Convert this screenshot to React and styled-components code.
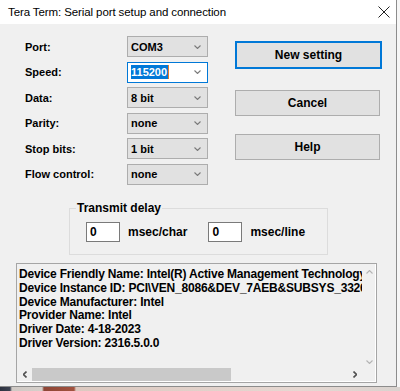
import React from 'react'
import styled, { createGlobalStyle } from 'styled-components'

const GlobalStyle = createGlobalStyle`
  html, body {
    margin: 0;
    padding: 0;
    background: #f6f6f6;
  }
  body {
    font-family: "Liberation Sans", Arial, sans-serif;
    color: #000;
  }
`

const Page = styled.div`
  width: 400px;
  height: 391px;
  overflow: hidden;
  display: flex;
  flex-direction: column;
`

const Window = styled.div`
  width: 397px;
  height: 387px;
  flex: none;
  box-sizing: border-box;
  background: #f0f0f0;
  border-right: 1px solid #8c8c8c;
  border-bottom: 1px solid #8c8c8c;
  display: flex;
  flex-direction: column;
`

const Desktop = styled.div`
  flex: 1;
  background: linear-gradient(90deg, #2d3240 0, #3b4150 10px, #cfc9c4 12px, #d6d0cb 42px,
    #8e4636 44px, #a2523e 74px, #dcc9c0 76px, #e6d8d2 300px, #d9d3cf 400px);
`

const TitleBar = styled.div`
  height: 24px;
  flex: none;
  background: #fff;
  display: flex;
  align-items: center;
  justify-content: space-between;
  padding-left: 8px;
`

const Title = styled.span`
  font-size: 11.5px;
  letter-spacing: -0.1px;
`

const Close = styled.div`
  width: 24px;
  height: 24px;
  display: flex;
  align-items: center;
  justify-content: center;
`

const Body = styled.div`
  display: flex;
  flex-direction: column;
  font-size: 11px;
  font-weight: bold;
`

const Top = styled.div`
  display: flex;
  padding: 12px 0 0 25px;
`

const Form = styled.div`
  display: grid;
  grid-template-columns: 102px 81px;
  grid-auto-rows: 21px;
  row-gap: 4.6px;
`

const Label = styled.div`
  display: flex;
  align-items: center;
`

const Combo = styled.div`
  box-sizing: border-box;
  display: flex;
  align-items: center;
  justify-content: space-between;
  padding: 0 6px 0 3px;
  background: ${p => (p.$focus ? '#fff' : '#e1e1e1')};
  border: 1px solid ${p => (p.$focus ? '#0078d7' : '#adadad')};
`

const Selected = styled.span`
  background: #0078d7;
  color: #fff;
  padding: 1px 1px 1px 0;
  border-right: 1px solid #e87a2a;
`

const Buttons = styled.div`
  display: flex;
  flex-direction: column;
  margin: 5px 0 0 27px;
`

const Button = styled.div`
  box-sizing: border-box;
  width: ${p => (p.$default ? '147px' : '145px')};
  height: ${p => (p.$default ? '28px' : '26px')};
  margin-bottom: ${p => p.$gap || 0}px;
  display: flex;
  align-items: center;
  justify-content: center;
  font-size: 12px;
  background: #e1e1e1;
  border: ${p => (p.$default ? '2px solid #0078d7' : '1px solid #adadad')};
`

const Group = styled.fieldset`
  margin: 17px 0 0 69px;
  width: 259px;
  height: 53px;
  box-sizing: border-box;
  padding: 7px 0 0 0;
  border: 1px solid #dcdcdc;
  min-width: 0;
`

const Legend = styled.legend`
  padding: 0 1px;
  margin-left: 6px;
  font-size: 12px;
  line-height: 13px;
`

const Row = styled.div`
  display: flex;
  align-items: center;
  margin-left: 16px;
`

const Field = styled.div`
  box-sizing: border-box;
  width: 34px;
  height: 20px;
  background: #fff;
  border: 1px solid #7a7a7a;
  padding-left: 3px;
  display: flex;
  align-items: center;
  font-size: 12px;
`

const Unit = styled.span`
  font-size: 12px;
  margin: 0 ${p => p.$after || 0}px 0 8px;
`

const InfoBox = styled.div`
  margin: 8px 0 0 16px;
  width: 361px;
  height: 120px;
  flex: none;
  box-sizing: border-box;
  border: 1px solid #a5a5a5;
  box-shadow: inset -1px -1px 0 #fff;
  display: flex;
  flex-direction: column;
`

const InfoMain = styled.div`
  flex: 1;
  min-height: 0;
  display: flex;
`

const InfoText = styled.div`
  flex: 1;
  min-width: 0;
  padding: 4px 0 0 2px;
  overflow: hidden;
  white-space: nowrap;
  font-size: 12px;
  line-height: 13.8px;
  letter-spacing: -0.2px;
`

const VBar = styled.div`
  width: 14px;
  flex: none;
  display: flex;
  flex-direction: column;
  justify-content: space-between;
  align-items: center;
  padding: 6px 0 4px;
  box-sizing: border-box;
`

const HBar = styled.div`
  height: 14px;
  flex: none;
  display: flex;
  align-items: center;
  padding: 0 19px 0 6px;
`

const Track = styled.div`
  flex: 1;
  height: 13px;
  margin: 0 8px 0 5px;
  display: flex;
`

const Thumb = styled.div`
  width: 199px;
  background: #c9c9c9;
`

const Chevron = ({ dir = 'down', color = '#7a7a7a', size = 7 }) => {
  const pts = {
    down: '0.5,0.5 3.5,3.5 6.5,0.5',
    up: '0.5,3.5 3.5,0.5 6.5,3.5',
    left: '3.5,0.5 0.5,3.5 3.5,6.5',
    right: '0.5,0.5 3.5,3.5 0.5,6.5',
  }[dir]
  const horiz = dir === 'left' || dir === 'right'
  return (
    <svg width={horiz ? 4 : size} height={horiz ? size : 4} viewBox={horiz ? '0 0 4 7' : '0 0 7 4'}>
      <polyline points={pts} fill="none" stroke={color} strokeWidth={horiz ? 1.6 : 1.1} />
    </svg>
  )
}

const settings = [
  ['Port:', 'COM3'],
  ['Speed:', '115200', true],
  ['Data:', '8 bit'],
  ['Parity:', 'none'],
  ['Stop bits:', '1 bit'],
  ['Flow control:', 'none'],
]

const info = [
  'Device Friendly Name: Intel(R) Active Management Technology - SOL (COM3)',
  'Device Instance ID: PCI\\VEN_8086&DEV_7AEB&SUBSYS_33261043',
  'Device Manufacturer: Intel',
  'Provider Name: Intel',
  'Driver Date: 4-18-2023',
  'Driver Version: 2316.5.0.0',
]

export default function App() {
  return (
    <Page>
      <GlobalStyle />
      <Window>
        <TitleBar>
          <Title>Tera Term: Serial port setup and connection</Title>
          <Close>
            <svg width="12" height="12" viewBox="0 0 12 12">
              <path d="M0.5 0.5 L11.5 11.5 M11.5 0.5 L0.5 11.5" stroke="#222" strokeWidth="1" />
            </svg>
          </Close>
        </TitleBar>
        <Body>
          <Top>
            <Form>
              {settings.map(([label, value, focus]) => (
                <React.Fragment key={label}>
                  <Label>{label}</Label>
                  <Combo $focus={focus}>
                    {focus ? <Selected>{value}</Selected> : <span>{value}</span>}
                    <Chevron />
                  </Combo>
                </React.Fragment>
              ))}
            </Form>
            <Buttons>
              <Button $default $gap={21}>New setting</Button>
              <Button $gap={18}>Cancel</Button>
              <Button>Help</Button>
            </Buttons>
          </Top>
          <Group>
            <Legend>Transmit delay</Legend>
            <Row>
              <Field>0</Field>
              <Unit $after={21}>msec/char</Unit>
              <Field>0</Field>
              <Unit>msec/line</Unit>
            </Row>
          </Group>
          <InfoBox>
            <InfoMain>
              <InfoText>
                {info.map(line => (
                  <div key={line}>{line}</div>
                ))}
              </InfoText>
              <VBar>
                <Chevron dir="up" color="#b4b4b4" />
                <Chevron dir="down" color="#b4b4b4" />
              </VBar>
            </InfoMain>
            <HBar>
              <Chevron dir="left" color="#505050" />
              <Track>
                <Thumb />
              </Track>
              <Chevron dir="right" color="#505050" />
            </HBar>
          </InfoBox>
        </Body>
      </Window>
      <Desktop />
    </Page>
  )
}
